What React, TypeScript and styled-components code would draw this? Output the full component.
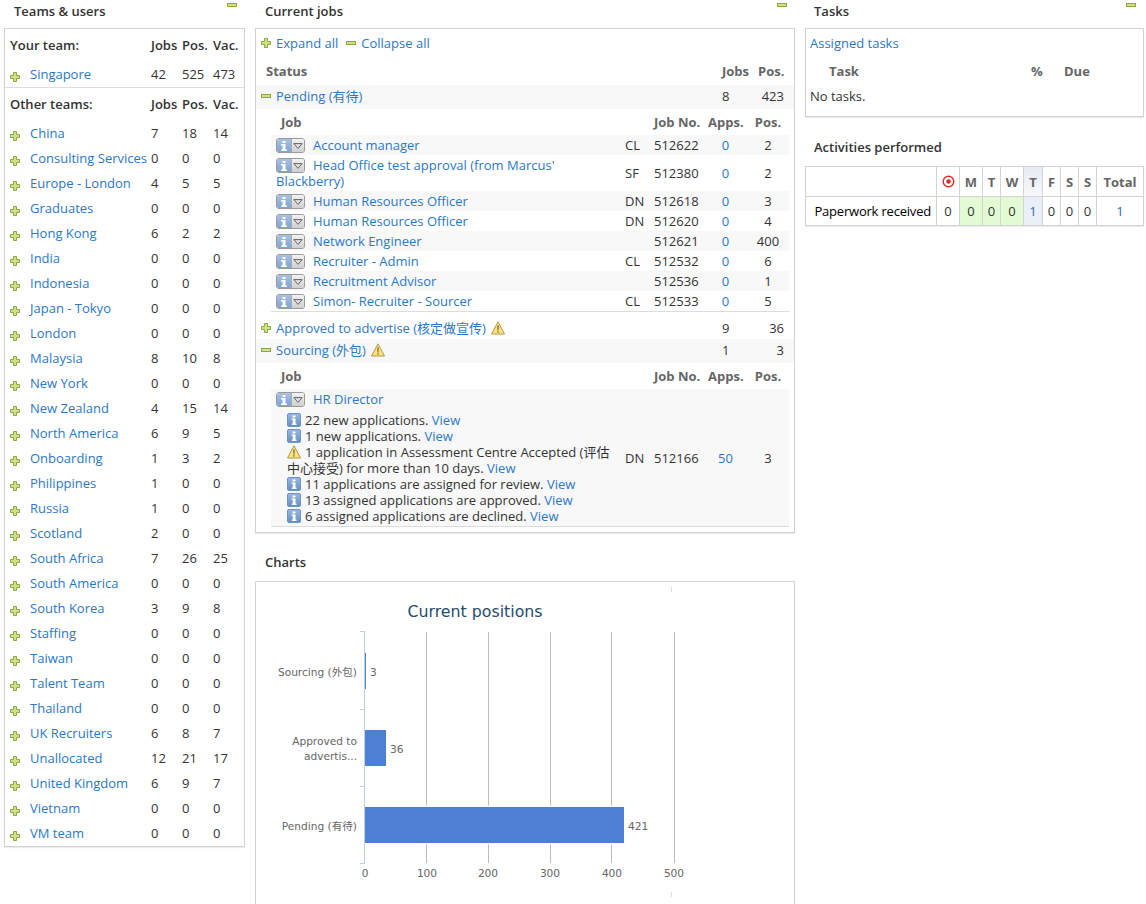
import React from "react";
import styled, { createGlobalStyle } from "styled-components";

const Global = createGlobalStyle`
  html, body { margin: 0; padding: 0; background: #fff; }
  body { font-family: "Open Sans", "Noto Sans CJK SC", sans-serif; font-size: 13px; color: #333; line-height: 16px; }
`;

const Page = styled.div`
  display: grid;
  grid-template-columns: 241px 540px 339px;
  column-gap: 10px;
  padding-left: 4px;
  height: 904px;
  overflow: hidden;
`;
const Column = styled.div`
  display: flex;
  flex-direction: column;
  min-width: 0;
`;
const SectionHead = styled.div<{ $inset?: number }>`
  display: flex;
  justify-content: space-between;
  height: 28px;
  padding: 3px 8px 0 ${p => p.$inset ?? 10}px;
  box-sizing: border-box;
  font-weight: 600;
  color: #333;
`;
const Panel = styled.div`
  border: 1px solid #d4d4d4;
  box-shadow: 0 1px 1px rgba(0,0,0,.08);
  background: #fff;
`;
const Link = styled.a`
  color: #2b77c9;
  text-decoration: none;
`;

const IconSvg = styled.svg`
  flex: none;
  display: block;
`;
const Plus = () => (
  <IconSvg width="10" height="10" viewBox="0 0 10 10">
    <path d="M3.500.5h3v3h3v3h-3v3h-3v-3h-3v-3h3z" fill="#cfe08a" stroke="#8ca83e" />
  </IconSvg>
);
const Minus = () => (
  <IconSvg width="10" height="4" viewBox="0 0 10 4">
    <rect x=".5" y=".5" width="9" height="3" fill="#cfe08a" stroke="#8ca83e" />
  </IconSvg>
);

const InlineSvg = styled.svg`
  display: inline-block;
  vertical-align: top;
  margin: 1px 4px 0 0;
`;
const Info = () => (
  <InlineSvg width="14" height="14" viewBox="0 0 14 14">
    <defs>
      <linearGradient id="ig" x1="0" y1="0" x2="0" y2="1">
        <stop offset="0" stopColor="#9db9de" />
        <stop offset="1" stopColor="#5f8fc8" />
      </linearGradient>
    </defs>
    <rect x=".5" y=".5" width="13" height="13" rx="1.500" fill="url(#ig)" stroke="#6d94c4" />
    <path d="M5.500 2.500h3v2h-3zM4.800 5.500h3.700v5h1v1.500H4.800v-1.500h1v-3.500h-1z" fill="#fff" />
  </InlineSvg>
);
const Warn = () => (
  <InlineSvg width="14" height="14" viewBox="0 0 14 14">
    <path d="M7 .8 13.500 13H.5z" fill="#fbe27e" stroke="#b49a4a" strokeLinejoin="round" />
    <path d="M6.400 4.500h1.200l-.2 5H6.600zM6.400 10.300h1.200v1.300H6.400z" fill="#5a4a20" />
  </InlineSvg>
);
const WarnAfter = styled.span`
  margin-left: 5px;
`;

const MenuBtn = styled.span`
  display: inline-flex;
  vertical-align: top;
  width: 29px;
  height: 15px;
  margin: 1px 8px 0 0;
  box-sizing: border-box;
  border: 1px solid #9a9a9a;
  border-radius: 3px;
  overflow: hidden;
`;
const MenuInfo = styled.span`
  width: 14px;
  background: linear-gradient(#a9c2e2, #7ea3d2);
  display: flex;
  align-items: center;
  justify-content: center;
`;
const MenuArrow = styled.span`
  flex: 1;
  background: linear-gradient(#f2f2f2, #cfcfcf);
  border-left: 1px solid #aaa;
  display: flex;
  align-items: center;
  justify-content: center;
`;
const InfoButton = () => (
  <MenuBtn>
    <MenuInfo>
      <svg width="6" height="10" viewBox="0 0 6 10">
        <path d="M1.500 0h3v2h-3zM0 3h4.500v5.500H6V10H0V8.500h1.500V4.500H0z" fill="#fff" />
      </svg>
    </MenuInfo>
    <MenuArrow>
      <svg width="10" height="6" viewBox="0 0 10 6">
        <path d="M.8.6h8.400L5 5.400z" fill="#ddd" stroke="#666" />
      </svg>
    </MenuArrow>
  </MenuBtn>
);

/* Teams panel */
const TeamRow = styled.div<{ $head?: boolean }>`
  display: grid;
  grid-template-columns: 20px 121px 31px 31px 1fr;
  align-items: center;
  box-sizing: border-box;
  height: ${p => (p.$head ? 33 : 25)}px;
  padding: 0 0 2px 5px;
  font-weight: ${p => (p.$head ? 600 : 400)};
`;
const HeadLabel = styled.span`
  grid-column: 1 / span 2;
`;
const IconCell = styled.span`
  padding-top: 6px;
`;
const Divider = styled.div`
  height: 1px;
  background: #ddd;
`;

const teams: [string, number, number, number][] = [
  ["China", 7, 18, 14], ["Consulting Services", 0, 0, 0], ["Europe - London", 4, 5, 5],
  ["Graduates", 0, 0, 0], ["Hong Kong", 6, 2, 2], ["India", 0, 0, 0], ["Indonesia", 0, 0, 0],
  ["Japan - Tokyo", 0, 0, 0], ["London", 0, 0, 0], ["Malaysia", 8, 10, 8], ["New York", 0, 0, 0],
  ["New Zealand", 4, 15, 14], ["North America", 6, 9, 5], ["Onboarding", 1, 3, 2],
  ["Philippines", 1, 0, 0], ["Russia", 1, 0, 0], ["Scotland", 2, 0, 0], ["South Africa", 7, 26, 25],
  ["South America", 0, 0, 0], ["South Korea", 3, 9, 8], ["Staffing", 0, 0, 0], ["Taiwan", 0, 0, 0],
  ["Talent Team", 0, 0, 0], ["Thailand", 0, 0, 0], ["UK Recruiters", 6, 8, 7],
  ["Unallocated", 12, 21, 17], ["United Kingdom", 6, 9, 7], ["Vietnam", 0, 0, 0], ["VM team", 0, 0, 0],
];

const Team = ({ t }: { t: [string, number, number, number] }) => (
  <TeamRow>
    <IconCell><Plus /></IconCell>
    <Link>{t[0]}</Link>
    <span>{t[1]}</span>
    <span>{t[2]}</span>
    <span>{t[3]}</span>
  </TeamRow>
);
const TeamHead = ({ label }: { label: string }) => (
  <TeamRow $head>
    <HeadLabel>{label}</HeadLabel>
    <span>Jobs</span>
    <span>Pos.</span>
    <span>Vac.</span>
  </TeamRow>
);

/* Jobs panel */
const ExpandBar = styled.div`
  display: flex;
  align-items: center;
  box-sizing: border-box;
  height: 29px;
  padding: 0 0 2px 5px;
`;
const ExpandIcon = styled.span`
  margin-right: 5px;
  padding-top: 1px;
`;
const ExpandLink = styled(Link)`
  margin-right: 8px;
`;
const Th = styled.span<{ $center?: boolean; $right?: boolean }>`
  font-weight: 700;
  color: #666;
  text-align: ${p => (p.$center ? "center" : p.$right ? "right" : "left")};
`;
const StatusGrid = styled.div<{ $shade?: boolean; $h: number; $lift?: boolean }>`
  display: grid;
  grid-template-columns: 15px 446px 36px 1fr;
  align-items: center;
  box-sizing: border-box;
  height: ${p => p.$h}px;
  padding: 0 10px ${p => (p.$lift ? 2 : 0)}px 5px;
  background: ${p => (p.$shade ? "#f8f8f8" : "#fff")};
`;
const StatusName = styled.span`
  display: flex;
  align-items: center;
`;
const StatusHeadLabel = styled(Th)`
  grid-column: 1 / span 2;
  padding-left: 5px;
`;
const Right = styled.span`
  text-align: right;
`;
const Nested = styled.div`
  margin: 0 5px 0 15px;
`;
const NestedRows = styled.div`
  border-bottom: 1px solid #ddd;
  margin-bottom: 5px;
`;
const JobRow = styled.div<{ $shade?: boolean; $minH?: number }>`
  display: grid;
  grid-template-columns: 354px 29px 54px 35px 1fr;
  align-items: center;
  min-height: ${p => p.$minH ?? 20}px;
  background: ${p => (p.$shade ? "#f8f8f8" : "#fff")};
`;
const JobTitle = styled.div`
  padding: 2px 0 2px 5px;
`;
const JobHeadLabel = styled(Th)`
  padding-left: 10px;
`;
const NoWrap = styled.span`
  white-space: nowrap;
`;
const Center = styled.span`
  text-align: center;
`;
const PosCell = styled(Center)`
  padding-left: 4px;
`;
const PosHead = styled(Th)`
  text-align: center;
  padding-left: 4px;
`;
const AlertList = styled.div`
  padding: 5px 0 0 11px;
  width: 325px;
`;
const AlertItem = styled.div``;

const jobs: [string, string, string, number][] = [
  ["Account manager", "CL", "512622", 2],
  ["Head Office test approval (from Marcus' Blackberry)", "SF", "512380", 2],
  ["Human Resources Officer", "DN", "512618", 3],
  ["Human Resources Officer", "DN", "512620", 4],
  ["Network Engineer", "", "512621", 400],
  ["Recruiter - Admin", "CL", "512532", 6],
  ["Recruitment Advisor", "", "512536", 1],
  ["Simon- Recruiter - Sourcer", "CL", "512533", 5],
];

const JobHead = () => (
  <JobRow $minH={26}>
    <JobHeadLabel>Job</JobHeadLabel>
    <span />
    <Th>Job No.</Th>
    <Th $center>Apps.</Th>
    <PosHead>Pos.</PosHead>
  </JobRow>
);

/* Tasks panel */
const TaskTop = styled.div`
  box-sizing: border-box;
  height: 29px;
  display: flex;
  align-items: center;
  padding: 0 0 2px 4px;
`;
const TaskHead = styled.div`
  display: grid;
  grid-template-columns: 202px 33px 1fr;
  align-items: center;
  box-sizing: border-box;
  height: 27px;
  padding: 0 0 2px 23px;
`;
const NoTasks = styled.div`
  height: 31px;
  padding: 3px 0 0 4px;
  box-sizing: border-box;
`;
const ActivitiesHead = styled(SectionHead)`
  height: 39px;
  padding-top: 12px;
  margin-top: 10px;
  align-items: flex-start;
`;
const ActivityGrid = styled.div`
  display: grid;
  grid-template-columns: 130px 23px 23px 18px 23px 19px 18px 18px 18px 1fr;
  grid-template-rows: 29px 29px;
  border: 1px solid #d4d4d4;
  box-shadow: 0 1px 1px rgba(0,0,0,.08);
`;
const Cell = styled.div<{ $bg?: string; $noLeft?: boolean; $bottom?: boolean }>`
  display: flex;
  align-items: center;
  justify-content: center;
  background: ${p => p.$bg ?? "#fff"};
  border-left: ${p => (p.$noLeft ? "none" : "1px solid #d4d4d4")};
  border-top: ${p => (p.$bottom ? "1px solid #d4d4d4" : "none")};
  white-space: nowrap;
`;
const LabelCell = styled(Cell)`
  justify-content: flex-end;
  padding-right: 5px;
`;
const ActLabel = styled.span`
  font-weight: 500;
  color: #000;
  letter-spacing: -0.2px;
`;
const Blue = styled.span`
  color: #2b6cb0;
`;

/* Chart */
const ChartBox = styled(Panel)`
  height: 340px;
`;
const ChartSvg = styled.svg`
  display: block;
`;
const ChartHead = styled(SectionHead)`
  height: 48px;
  padding-top: 21px;
`;

const Chart = () => {
  const label = { fontFamily: '"DejaVu Sans","Noto Sans CJK SC",sans-serif', fontSize: 10.6, fill: "#666" };
  return (
    <ChartSvg width="538" height="340" viewBox="0 0 538 340">
      <g transform="translate(-256 -582)">
        <path d="M671.500 587v5M671.500 892v5" stroke="#ddd" />
        {[426.5, 488.5, 550.5, 611.5, 674.5].map(x => (
          <path key={x} d={`M${x} 632V863`} stroke="#bcbcbc" />
        ))}
        <text x="475" y="617" textAnchor="middle" fontFamily='"DejaVu Sans",sans-serif' fontSize="15.8" fill="#274b6d">Current positions</text>
        <path d="M364.500 631V863M360 631.500h5M360 709.500h5M360 786.500h5M360 863.500h5" stroke="#c0d0e0" fill="none" />
        <rect x="365" y="653" width="1" height="36" fill="#4d7fd4" />
        <rect x="365" y="730" width="21" height="36" fill="#4d7fd4" />
        <rect x="365" y="805.500" width="259.500" height="39" fill="#fff" />
        <rect x="365" y="807" width="259" height="36" fill="#4d7fd4" />
        <text {...label} x="357" y="676" textAnchor="end">Sourcing (外包)</text>
        <text {...label} x="357" y="745" textAnchor="end">Approved to</text>
        <text {...label} x="357" y="760" textAnchor="end">advertis...</text>
        <text {...label} x="357" y="830" textAnchor="end">Pending (有待)</text>
        <text {...label} x="370" y="676">3</text>
        <text {...label} x="390" y="753">36</text>
        <text {...label} x="628" y="830">421</text>
        {([[365, "0"], [427, "100"], [488, "200"], [550, "300"], [612, "400"], [674, "500"]] as [number, string][]).map(([x, t]) => (
          <text key={t} {...label} x={x} y="877" textAnchor="middle">{t}</text>
        ))}
      </g>
    </ChartSvg>
  );
};

export default function App() {
  return (
    <Page>
      <Global />
      <Column>
        <SectionHead>
          <span>Teams &amp; users</span>
          <Minus />
        </SectionHead>
        <Panel>
          <TeamHead label="Your team:" />
          <Team t={["Singapore", 42, 525, 473]} />
          <Divider />
          <TeamHead label="Other teams:" />
          {teams.map(t => <Team key={t[0]} t={t} />)}
        </Panel>
      </Column>

      <Column>
        <SectionHead>
          <span>Current jobs</span>
          <Minus />
        </SectionHead>
        <Panel>
          <ExpandBar>
            <ExpandIcon><Plus /></ExpandIcon>
            <ExpandLink>Expand all</ExpandLink>
            <ExpandIcon><Minus /></ExpandIcon>
            <ExpandLink>Collapse all</ExpandLink>
          </ExpandBar>
          <StatusGrid $h={27} $lift>
            <StatusHeadLabel>Status</StatusHeadLabel>
            <Th>Jobs</Th>
            <Th $right>Pos.</Th>
          </StatusGrid>
          <StatusGrid $shade $h={24} $lift>
            <Minus />
            <Link>Pending (有待)</Link>
            <span>8</span>
            <Right>423</Right>
          </StatusGrid>
          <Nested>
            <JobHead />
            <NestedRows>
              {jobs.map((j, i) => (
                <JobRow key={j[2]} $shade={i % 2 === 0}>
                  <JobTitle><InfoButton /><Link>{j[0]}</Link></JobTitle>
                  <span>{j[1]}</span>
                  <span>{j[2]}</span>
                  <Center><Link>0</Link></Center>
                  <PosCell>{j[3]}</PosCell>
                </JobRow>
              ))}
            </NestedRows>
          </Nested>
          <StatusGrid $h={22}>
            <Plus />
            <StatusName>
              <Link>Approved to advertise (核定做宣传)</Link>
              <WarnAfter><Warn /></WarnAfter>
            </StatusName>
            <span>9</span>
            <Right>36</Right>
          </StatusGrid>
          <StatusGrid $shade $h={24} $lift>
            <Minus />
            <StatusName>
              <Link>Sourcing (外包)</Link>
              <WarnAfter><Warn /></WarnAfter>
            </StatusName>
            <span>1</span>
            <Right>3</Right>
          </StatusGrid>
          <Nested>
            <JobHead />
            <NestedRows>
              <JobRow $shade $minH={137}>
                <JobTitle>
                  <InfoButton /><Link>HR Director</Link>
                  <AlertList>
                    <AlertItem><Info />22 new applications. <Link>View</Link></AlertItem>
                    <AlertItem><Info />1 new applications. <Link>View</Link></AlertItem>
                    <AlertItem><Warn />1 application in Assessment Centre Accepted (评估中心接受) for more than 10 days. <Link>View</Link></AlertItem>
                    <AlertItem><Info />11 applications are assigned for review. <Link>View</Link></AlertItem>
                    <AlertItem><Info />13 assigned applications are approved. <Link>View</Link></AlertItem>
                    <AlertItem><Info />6 assigned applications are declined. <Link>View</Link></AlertItem>
                  </AlertList>
                </JobTitle>
                <span>DN</span>
                <NoWrap>512166</NoWrap>
                <Center><Link>50</Link></Center>
                <PosCell>3</PosCell>
              </JobRow>
            </NestedRows>
          </Nested>
        </Panel>
        <ChartHead><span>Charts</span></ChartHead>
        <ChartBox><Chart /></ChartBox>
      </Column>

      <Column>
        <SectionHead $inset={9}>
          <span>Tasks</span>
          <Minus />
        </SectionHead>
        <Panel>
          <TaskTop><Link>Assigned tasks</Link></TaskTop>
          <TaskHead>
            <Th>Task</Th>
            <Th>%</Th>
            <Th>Due</Th>
          </TaskHead>
          <NoTasks>No tasks.</NoTasks>
        </Panel>
        <ActivitiesHead $inset={9}><span>Activities performed</span></ActivitiesHead>
        <ActivityGrid>
          <Cell $noLeft />
          <Cell>
            <svg width="13" height="13" viewBox="0 0 13 13">
              <circle cx="6.500" cy="6.500" r="5.300" fill="#fff" stroke="#e0282a" strokeWidth="1.400" />
              <circle cx="6.500" cy="6.500" r="2.200" fill="#e0282a" />
            </svg>
          </Cell>
          {["M", "T", "W"].map((d, i) => <Cell key={i}><Th>{d}</Th></Cell>)}
          <Cell $bg="linear-gradient(#e6ebf5,#f6f8fb)"><Th>T</Th></Cell>
          {["F", "S", "S", "Total"].map((d, i) => <Cell key={i}><Th>{d}</Th></Cell>)}
          <LabelCell $noLeft $bottom><ActLabel>Paperwork received</ActLabel></LabelCell>
          <Cell $bottom>0</Cell>
          <Cell $bottom $bg="#e2fbd5">0</Cell>
          <Cell $bottom $bg="#e2fbd5">0</Cell>
          <Cell $bottom $bg="#e2fbd5">0</Cell>
          <Cell $bottom $bg="#eaeff8"><Blue>1</Blue></Cell>
          <Cell $bottom>0</Cell>
          <Cell $bottom>0</Cell>
          <Cell $bottom>0</Cell>
          <Cell $bottom><Blue>1</Blue></Cell>
        </ActivityGrid>
      </Column>
    </Page>
  );
}
